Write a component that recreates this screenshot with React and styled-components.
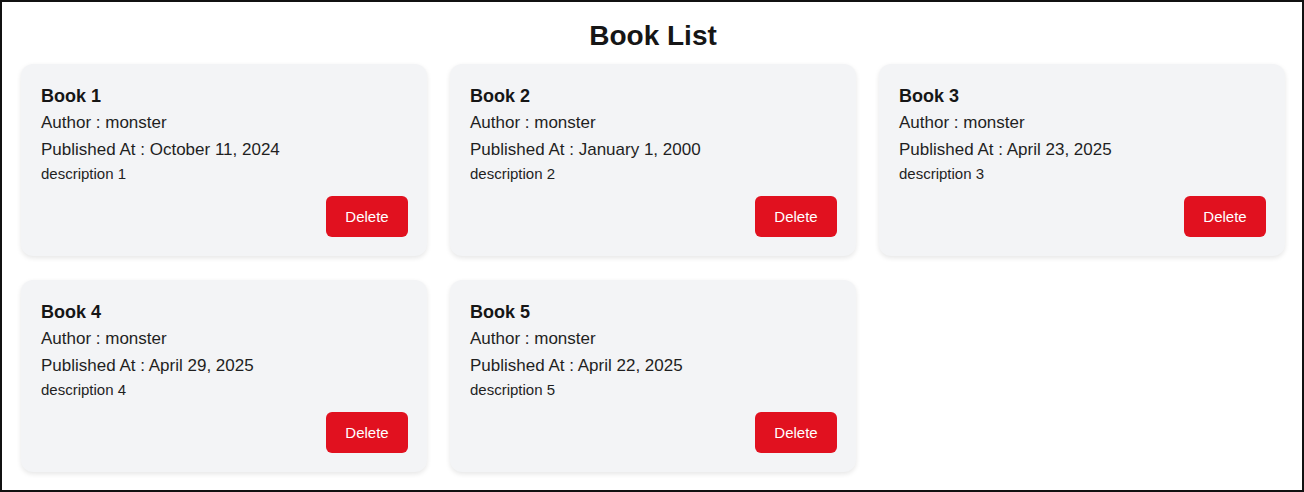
import React from "react";
import styled, { createGlobalStyle } from "styled-components";

const GlobalStyle = createGlobalStyle`
  html, body {
    margin: 0;
    padding: 0;
    background: white;
  }
  body {
    font-family: "Liberation Sans", Arial, sans-serif;
    color: #1c1c1c;
  }
`;

const Frame = styled.div`
  box-sizing: border-box;
  width: 1304px;
  height: 492px;
  border: 2px solid #111;
  padding: 0 17px 0 19px;
`;

const Title = styled.h1`
  margin: 0;
  padding-top: 18px;
  height: 62px;
  box-sizing: border-box;
  font-size: 28px;
  line-height: 32px;
  font-weight: 700;
  text-align: center;
  color: #161616;
`;

const Grid = styled.div`
  display: grid;
  grid-template-columns: repeat(3, 1fr);
  column-gap: 23px;
  row-gap: 24px;
`;

const Card = styled.div`
  box-sizing: border-box;
  height: 192px;
  background: #f3f4f6;
  border-radius: 12px;
  padding: 21px 19px 19px 20px;
  box-shadow: 0 2px 5px rgba(0, 0, 0, 0.1);
  display: flex;
  flex-direction: column;
`;

const BookTitle = styled.h2`
  margin: 0;
  font-size: 18px;
  line-height: 22px;
  font-weight: 700;
  color: #161616;
`;

const Line = styled.p`
  margin: ${(p) => p.$top}px 0 0;
  font-size: ${(p) => p.$size}px;
  line-height: ${(p) => p.$lh}px;
  color: #1f1f1f;
`;

const Actions = styled.div`
  margin-top: auto;
  display: flex;
  justify-content: flex-end;
`;

const DeleteButton = styled.button`
  width: 82px;
  height: 41px;
  border: none;
  border-radius: 6px;
  background: #e1111f;
  color: white;
  font-family: "Liberation Sans", Arial, sans-serif;
  font-size: 15px;
  cursor: pointer;
`;

const books = [
  { id: 1, date: "October 11, 2024" },
  { id: 2, date: "January 1, 2000" },
  { id: 3, date: "April 23, 2025" },
  { id: 4, date: "April 29, 2025" },
  { id: 5, date: "April 22, 2025" },
];

const App = () => {
  return (
    <Frame>
      <GlobalStyle />
      <Title>Book List</Title>
      <Grid>
        {books.map((book) => (
          <Card key={book.id}>
            <BookTitle>Book {book.id}</BookTitle>
            <Line $top={4} $size={17} $lh={24}>
              Author : monster
            </Line>
            <Line $top={3} $size={17} $lh={24}>
              Published At : {book.date}
            </Line>
            <Line $top={2} $size={15} $lh={20}>
              description {book.id}
            </Line>
            <Actions>
              <DeleteButton>Delete</DeleteButton>
            </Actions>
          </Card>
        ))}
      </Grid>
    </Frame>
  );
};

export default App;
